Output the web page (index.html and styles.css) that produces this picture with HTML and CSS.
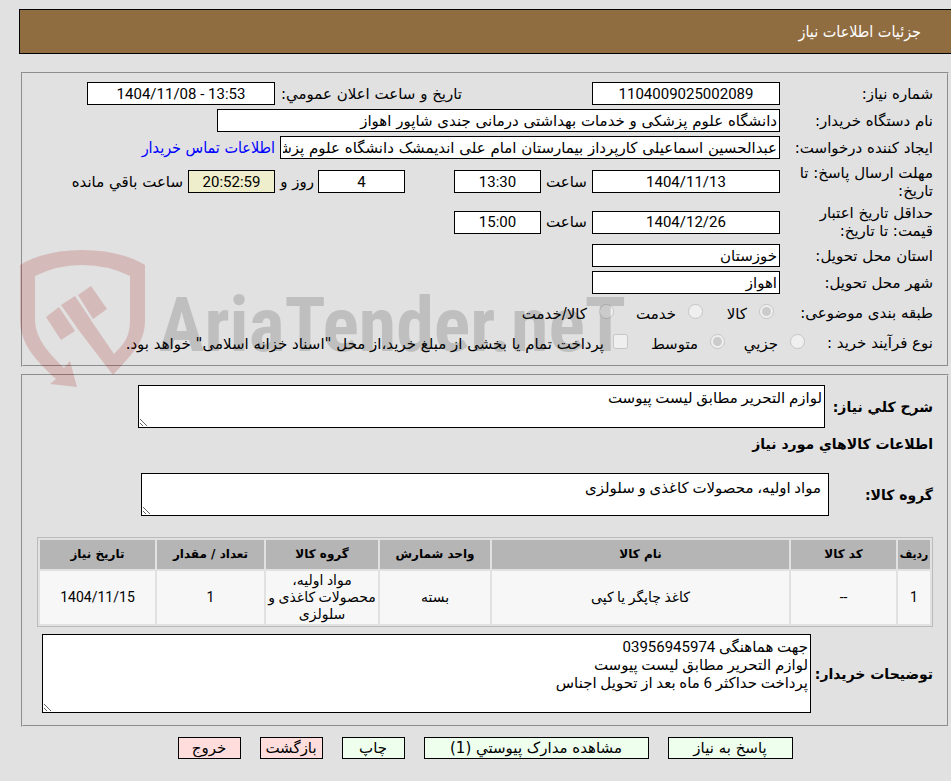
FILE: index.html
```html
<!DOCTYPE html>
<html lang="fa" dir="rtl">
<head>
  <meta charset="UTF-8" />
  <meta name="viewport" content="width=device-width, initial-scale=1.0" />
  <title>جزئیات اطلاعات نیاز</title>
  <link rel="stylesheet" href="styles.css">
</head>
<body>

  <header class="title-bar">
    <h1>جزئیات اطلاعات نیاز</h1>
  </header>

  <main>
    <fieldset class="panel need-info">
      <div class="row">
        <label class="caption" for="needNo">شماره نیاز:</label>
        <input class="w-date center" type="text" id="needNo" value="1104009025002089" readonly>
        <label class="announce" for="announceDate">تاریخ و ساعت اعلان عمومي:</label>
        <input class="w-date center" type="text" id="announceDate" value="1404/11/08 - 13:53" dir="ltr" readonly>
      </div>
      <div class="row">
        <label class="caption" for="buyerOrg">نام دستگاه خریدار:</label>
        <input class="w-org" type="text" id="buyerOrg" value="دانشگاه علوم پزشکی و خدمات بهداشتی درمانی جندی شاپور اهواز" readonly>
      </div>
      <div class="row">
        <label class="caption" for="creator">ایجاد کننده درخواست:</label>
        <input class="w-creator" type="text" id="creator" value="عبدالحسین اسماعیلی کارپرداز بیمارستان امام علی اندیمشک دانشگاه علوم پزشکی و خدمات بهداشتی درمانی جندی شاپور اهواز" readonly>
        <a class="contact" href="#">اطلاعات تماس خریدار</a>
      </div>
      <div class="row tall">
        <label class="caption" for="replyDate">مهلت ارسال پاسخ: تا تاریخ:</label>
        <input class="w-date center" type="text" id="replyDate" value="1404/11/13" readonly>
        <label class="hour" for="replyHour">ساعت</label>
        <input class="w-time center" type="text" id="replyHour" value="13:30" readonly>
        <div class="days">
          <input class="w-time center" type="text" id="daysLeft" value="4" readonly>
        </div>
        <label class="day" for="daysLeft">روز و</label>
        <input class="w-time center remain" type="text" id="timeLeft" value="20:52:59" readonly>
        <label class="left-over" for="timeLeft">ساعت باقي مانده</label>
      </div>
      <div class="row">
        <label class="caption" for="validDate">حداقل تاریخ اعتبار قیمت: تا تاریخ:</label>
        <input class="w-date center" type="text" id="validDate" value="1404/12/26" readonly>
        <label class="hour" for="validHour">ساعت</label>
        <input class="w-time center" type="text" id="validHour" value="15:00" readonly>
      </div>
      <div class="row">
        <label class="caption" for="province">استان محل تحویل:</label>
        <input class="w-date" type="text" id="province" value="خوزستان" readonly>
      </div>
      <div class="row">
        <label class="caption" for="city">شهر محل تحویل:</label>
        <input class="w-date" type="text" id="city" value="اهواز" readonly>
      </div>
      <div class="row options" role="radiogroup" aria-labelledby="subjectCaption">
        <span class="caption" id="subjectCaption">طبقه بندی موضوعی:</span>
        <label class="option goods"><input type="radio" name="subject" checked disabled><span>کالا</span></label>
        <label class="option service"><input type="radio" name="subject" disabled><span>خدمت</span></label>
        <label class="option"><input type="radio" name="subject" disabled><span>کالا/خدمت</span></label>
      </div>
      <div class="row options process" role="radiogroup" aria-labelledby="processCaption">
        <span class="caption" id="processCaption">نوع فرآیند خرید :</span>
        <label class="option minor"><input type="radio" name="process" disabled><span>جزیي</span></label>
        <label class="option medium"><input type="radio" name="process" checked disabled><span>متوسط</span></label>
        <label class="option treasury"><input type="checkbox" name="treasury" disabled><span>پرداخت تمام یا بخشی از مبلغ خرید،از محل "اسناد خزانه اسلامی" خواهد بود.</span></label>
      </div>
    </fieldset>

    <fieldset class="panel need-items">
      <div class="area-row">
        <label for="summary">شرح کلي نیاز:</label>
        <textarea class="short" id="summary" readonly>لوازم التحریر مطابق لیست پیوست</textarea>
      </div>
      <h2>اطلاعات کالاهاي مورد نیاز</h2>
      <div class="area-row group">
        <label for="goodsGroup">گروه کالا:</label>
        <textarea class="short" id="goodsGroup" readonly>مواد اولیه، محصولات کاغذی و سلولزی</textarea>
      </div>

      <table class="goods-table">
        <colgroup>
          <col class="c-row"><col class="c-code"><col><col class="c-unit"><col class="c-group"><col class="c-count"><col class="c-date">
        </colgroup>
        <thead>
          <tr>
            <th>ردیف</th>
            <th>کد کالا</th>
            <th>نام کالا</th>
            <th>واحد شمارش</th>
            <th>گروه کالا</th>
            <th>تعداد / مقدار</th>
            <th>تاریخ نیاز</th>
          </tr>
        </thead>
        <tbody>
          <tr>
            <td>1</td>
            <td>--</td>
            <td>کاغذ چاپگر یا کپی</td>
            <td>بسته</td>
            <td>مواد اولیه، محصولات کاغذی و سلولزی</td>
            <td>1</td>
            <td>1404/11/15</td>
          </tr>
        </tbody>
      </table>

      <div class="area-row notes">
        <label for="notes">توضیحات خریدار:</label>
        <textarea id="notes" readonly>جهت هماهنگی 03956945974
لوازم التحریر مطابق لیست پیوست
پرداخت حداکثر 6 ماه بعد از تحویل اجناس</textarea>
      </div>
    </fieldset>

    <div class="actions">
      <button class="btn reply" type="button">پاسخ به نیاز</button>
      <button class="btn docs" type="button">مشاهده مدارک پیوستي (1)</button>
      <button class="btn" type="button">چاپ</button>
      <button class="btn red" type="button">بازگشت</button>
      <button class="btn red" type="button">خروج</button>
    </div>
  </main>

  <svg class="watermark" width="606" height="140" viewBox="20 249 606 140" direction="ltr" aria-hidden="true">
    <g fill="#9f0000">
      <path d="M20 265Q45 250 82 250Q120 250 145 265V320C145 342 134 352 113 375L77 328L90 319L114 354C126 342 130 336 130 318V276Q108 265 82 265Q57 265 35 276V318C35 338 46 350 64 368L70 361L77 387L50 384L56 379C40 364 20 346 20 320Z"/>
      <path d="M46 317L59 307L75 331L61 340ZM61 305L75 296L91 320L78 329ZM78 295L91 286L107 309L93 319Z"/>
    </g>
    <text x="159" y="351">AriaTender.neT</text>
  </svg>

</body>
</html>
```
FILE: styles.css
```css
* {
  box-sizing: border-box;
}
body {
  margin: 0;
  padding-top: 9px;
  background: #e1e1e1;
  color: #000;
  font-family: "DejaVu Sans", Tahoma, sans-serif;
  font-size: 15px;
  line-height: 18px;
  position: relative;
}
.title-bar {
  margin: 0 0 18px 19px;
  padding: 13px 30px 12px;
  background: #906d41;
  border: 1px solid #000;
  border-right: none;
}
.title-bar h1 {
  margin: 0;
  color: #fff;
  font-family: "DejaVu Sans Condensed", Tahoma, sans-serif;
  font-size: 16px;
  font-weight: normal;
}
main {
  margin: 0 2px 0 21px;
}
.panel {
  min-width: 0;
  margin: 0 0 7px;
  border: 2px groove #e1e1e1;
}
.need-info {
  display: flex;
  flex-direction: column;
  gap: 4px;
  padding: 8px 14px 11px;
}
.row {
  display: flex;
  align-items: center;
}
.row.tall {
  min-height: 37px;
}
.caption {
  flex: none;
  width: 153px;
  padding-left: 14px;
}
input[type="text"],
textarea {
  margin: 0;
  background: #fff;
  border: 1px solid #000;
  border-radius: 0;
  color: #000;
  font: inherit;
}
input[type="text"] {
  flex: none;
  height: 23px;
  padding: 0 2px;
}
input.center {
  text-align: center;
}
.w-date {
  width: 188px;
}
.w-time {
  width: 87px;
}
.w-org {
  width: 563px;
}
.w-creator {
  width: 500px;
}
.announce {
  width: 187px;
  margin-right: 130px;
  white-space: nowrap;
}
.contact {
  margin-right: 5px;
  color: #00f;
  font-family: "DejaVu Sans Condensed", Tahoma, sans-serif;
  font-size: 16px;
  text-decoration: none;
}
.hour {
  width: 51px;
  text-align: center;
}
.days {
  margin-right: 49px;
}
.day {
  width: 43px;
  padding-right: 4px;
  white-space: nowrap;
}
.left-over {
  margin-right: 5px;
}
input.remain {
  background: #eeeecc;
}
.options {
  height: 26px;
}
.options .caption {
  padding-top: 3px;
}
.option {
  display: flex;
  align-items: center;
  gap: 12px;
  white-space: nowrap;
}
.option input {
  flex: none;
  width: 15px;
  height: 15px;
  margin: 0;
}
.option span {
  padding-top: 5px;
}
.goods {
  width: 71px;
  margin-right: 6px;
}
.service {
  width: 89px;
}
.process .caption {
  width: 128px;
  padding-left: 0;
}
.minor {
  width: 80px;
}
.medium {
  width: 97px;
}
.treasury {
  gap: 9px;
}
.need-items {
  padding: 9px 14px 12px;
}
.need-items h2 {
  margin: 7px 0 20px;
  font-size: 14px;
  line-height: 18px;
}
.area-row {
  display: flex;
  align-items: center;
  padding-left: 101px;
}
.area-row label {
  flex: none;
  width: 108px;
  font-size: 14px;
  font-weight: bold;
  white-space: nowrap;
}
textarea {
  display: block;
  flex: 1;
  min-width: 0;
  height: 79px;
  padding: 3px 2px;
}
input.center,
textarea,
.goods-table td {
  font-family: Roboto, "DejaVu Sans", sans-serif;
}
textarea.short {
  height: 43px;
}
.group {
  padding-left: 104px;
}
.group label {
  width: 104px;
}
.group textarea {
  padding: 5px 7px;
}
.notes {
  padding-left: 5px;
}
.notes label {
  width: 122px;
}
.goods-table {
  width: 100%;
  margin: 21px 0 7px;
  border: 1px solid #bbb;
  border-spacing: 2px;
  table-layout: fixed;
  text-align: center;
  font-size: 14px;
  line-height: 17px;
}
.goods-table th {
  height: 29px;
  padding: 0;
  background: #b5b5b5;
  font-size: 12px;
  white-space: nowrap;
}
.goods-table td {
  height: 53px;
  padding: 1px;
  background: #f7f7f7;
}
.goods-table th:first-child {
  font-family: "DejaVu Sans Condensed", Tahoma, sans-serif;
}
.c-row {
  width: 32px;
}
.c-code {
  width: 105px;
}
.c-unit {
  width: 110px;
}
.c-group {
  width: 112px;
}
.c-count {
  width: 107px;
}
.c-date {
  width: 115px;
}
.actions {
  display: flex;
  justify-content: center;
  gap: 19px;
  margin-top: 10px;
  padding-bottom: 16px;
}
.btn {
  width: 63px;
  height: 22px;
  padding: 0;
  background: #eeffee;
  border: 1px solid #000;
  color: #000;
  font: inherit;
  white-space: nowrap;
  cursor: pointer;
}
.btn.reply {
  width: 125px;
}
.btn.docs {
  width: 225px;
}
.btn.red {
  background: #ffdddd;
}

/* logo laid over the page */
.watermark {
  position: absolute;
  left: 20px;
  top: 249px;
  opacity: 0.17;
  pointer-events: none;
}
.watermark text {
  fill: #1e1e1e;
  font-family: "Roboto Condensed", Roboto, sans-serif;
  font-size: 76px;
  font-weight: bold;
}
```
